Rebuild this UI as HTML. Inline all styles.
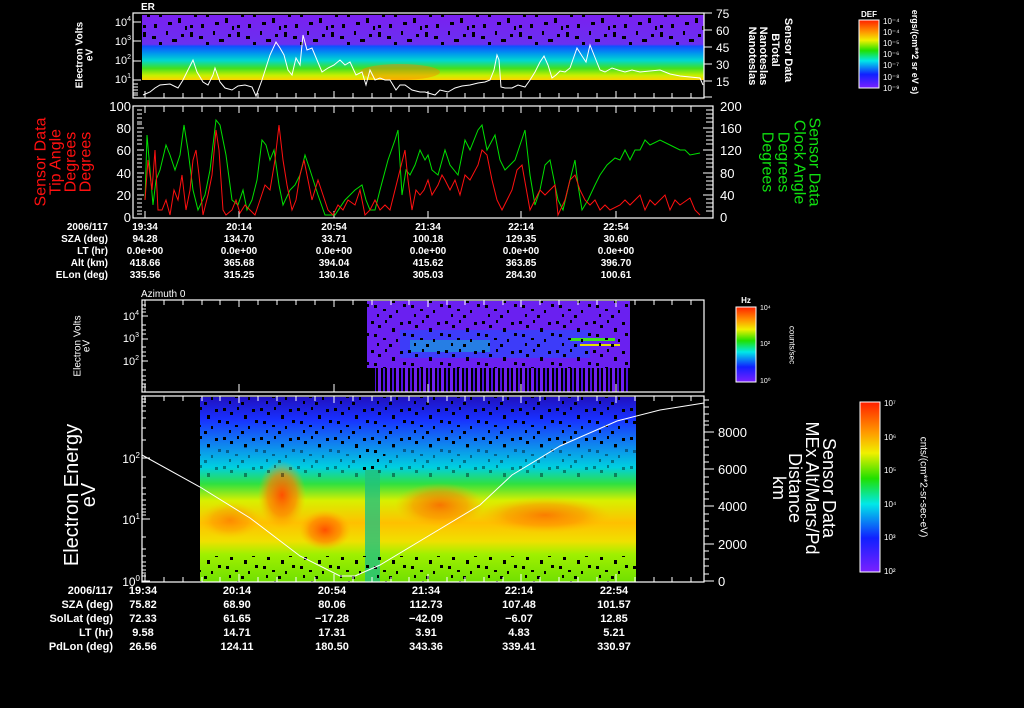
<!DOCTYPE html>
<html><head><meta charset="utf-8"><style>
html,body{margin:0;padding:0;background:#000;}
svg{display:block;}
text{font-family:"Liberation Sans",sans-serif;fill:#fff;}
</style></head><body>
<svg width="1024" height="708" viewBox="0 0 1024 708" xmlns="http://www.w3.org/2000/svg">
<defs>
<linearGradient id="rb" x1="0" y1="0" x2="0" y2="1">
<stop offset="0" stop-color="#ff2000"/><stop offset="0.18" stop-color="#ff9a00"/><stop offset="0.3" stop-color="#f0f000"/><stop offset="0.45" stop-color="#20e000"/><stop offset="0.6" stop-color="#00e8e8"/><stop offset="0.8" stop-color="#1020ff"/><stop offset="1" stop-color="#7a20ff"/>
</linearGradient>
<linearGradient id="er" x1="0" y1="0" x2="0" y2="1">
<stop offset="0" stop-color="#7a20f0"/><stop offset="0.45" stop-color="#6a30f0"/><stop offset="0.48" stop-color="#1050ff"/><stop offset="0.58" stop-color="#0090f0"/><stop offset="0.7" stop-color="#00d8d0"/><stop offset="0.82" stop-color="#40e020"/><stop offset="0.93" stop-color="#c8f000"/><stop offset="1" stop-color="#ffd000"/>
</linearGradient>
<linearGradient id="sp" x1="0" y1="0" x2="0" y2="1">
<stop offset="0" stop-color="#2010c0"/><stop offset="0.12" stop-color="#1830ff"/><stop offset="0.25" stop-color="#1080f0"/><stop offset="0.38" stop-color="#00d0e0"/><stop offset="0.47" stop-color="#30e040"/><stop offset="0.56" stop-color="#d8f000"/><stop offset="0.68" stop-color="#ffc000"/><stop offset="0.78" stop-color="#f0e000"/><stop offset="0.85" stop-color="#a0f000"/><stop offset="1" stop-color="#70e000"/>
</linearGradient>
<radialGradient id="blob"><stop offset="0" stop-color="#ff5000"/><stop offset="0.6" stop-color="#ff8000" stop-opacity="0.7"/><stop offset="1" stop-color="#ffb000" stop-opacity="0"/></radialGradient>
<pattern id="spk" width="47" height="31" patternUnits="userSpaceOnUse">
<rect x="2" y="1" width="3" height="5" fill="#000"/><rect x="11" y="5" width="4" height="3" fill="#000"/><rect x="18" y="11" width="3" height="6" fill="#000"/><rect x="6" y="14" width="3" height="3" fill="#000"/><rect x="25" y="0" width="2" height="4" fill="#000"/><rect x="31" y="8" width="5" height="3" fill="#000"/><rect x="40" y="3" width="3" height="3" fill="#000"/><rect x="37" y="18" width="3" height="5" fill="#000"/><rect x="27" y="22" width="4" height="3" fill="#000"/><rect x="13" y="24" width="3" height="4" fill="#000"/><rect x="2" y="25" width="3" height="3" fill="#000"/><rect x="44" y="26" width="2" height="4" fill="#000"/>
</pattern>
<pattern id="spk2" width="37" height="29" patternUnits="userSpaceOnUse">
<rect x="1" y="2" width="3" height="3" fill="#000"/><rect x="8" y="6" width="3" height="3" fill="#000"/><rect x="15" y="1" width="2" height="3" fill="#000"/><rect x="22" y="9" width="3" height="4" fill="#000"/><rect x="30" y="3" width="3" height="3" fill="#000"/><rect x="4" y="15" width="3" height="3" fill="#000"/><rect x="13" y="19" width="3" height="2" fill="#000"/><rect x="26" y="20" width="2" height="3" fill="#000"/><rect x="33" y="14" width="3" height="3" fill="#000"/><rect x="19" y="25" width="3" height="3" fill="#000"/><rect x="7" y="24" width="2" height="3" fill="#000"/>
</pattern>
<pattern id="bars" width="9" height="30" patternUnits="userSpaceOnUse">
<rect x="0" y="0" width="3" height="30" fill="#7020f0"/><rect x="5" y="0" width="2" height="30" fill="#5010e0"/>
</pattern>
</defs>

<!-- ===== Panel 1 ER ===== -->
<text x="141" y="10" font-size="10" font-weight="bold">ER</text>
<rect x="142" y="15" width="562" height="65" fill="url(#er)"/>
<rect x="142" y="15" width="562" height="30" fill="url(#spk)"/>
<ellipse cx="400" cy="72" rx="40" ry="8" fill="#ff8000" opacity="0.45"/>
<rect x="133" y="13" width="571" height="85" fill="none" stroke="#fff" stroke-width="1.2"/>
<g stroke="#fff" stroke-width="1">
<line x1="133" y1="22" x2="141" y2="22"/><line x1="133" y1="41" x2="141" y2="41"/><line x1="133" y1="61" x2="141" y2="61"/><line x1="133" y1="80" x2="141" y2="80"/>
<line x1="133" y1="84" x2="138" y2="84"/><line x1="133" y1="87" x2="138" y2="87"/><line x1="133" y1="90" x2="138" y2="90"/><line x1="133" y1="93" x2="138" y2="93"/><line x1="133" y1="95" x2="138" y2="95"/>
<line x1="704" y1="13" x2="712" y2="13"/><line x1="704" y1="30" x2="712" y2="30"/><line x1="704" y1="47" x2="712" y2="47"/><line x1="704" y1="64" x2="712" y2="64"/><line x1="704" y1="81" x2="712" y2="81"/><line x1="704" y1="97" x2="712" y2="97"/>
</g>
<path d="M145 98v-7M164 98v-5M183 98v-5M202 98v-5M220 98v-5M239 98v-7M258 98v-5M277 98v-5M296 98v-5M315 98v-5M334 98v-7M353 98v-5M372 98v-5M391 98v-5M409 98v-5M428 98v-7M447 98v-5M465 98v-5M484 98v-5M503 98v-5M521 98v-7M540 98v-5M559 98v-5M578 98v-5M597 98v-5M616 98v-7M635 98v-5M654 98v-5M672 98v-5M691 98v-5" stroke="#fff"/>
<g font-size="11" text-anchor="end">
<text x="131" y="26">10<tspan font-size="7" dy="-5">4</tspan></text>
<text x="131" y="45">10<tspan font-size="7" dy="-5">3</tspan></text>
<text x="131" y="64">10<tspan font-size="7" dy="-5">2</tspan></text>
<text x="131" y="83">10<tspan font-size="7" dy="-5">1</tspan></text>
</g>
<g font-size="12"><text x="716" y="18">75</text><text x="716" y="35">60</text><text x="716" y="52">45</text><text x="716" y="69">30</text><text x="716" y="86">15</text></g>
<polyline fill="none" stroke="#fff" stroke-width="1" points="143,95 150,92 155,88 160,85 170,84 178,88 183,80 188,70 193,60 197,72 203,82 208,85 213,75 215,68 220,82 225,88 232,90 238,86 245,85 252,87 256,96 262,80 270,55 276,42 280,48 284,55 288,70 292,75 296,58 300,65 303,35 307,50 312,48 317,60 322,72 328,68 334,65 340,60 345,65 350,62 356,75 362,72 366,85 370,70 375,80 380,78 385,80 390,80 396,90 400,85 405,85 412,90 420,92 425,92 435,95 440,90 448,92 455,88 462,86 470,85 478,83 485,82 490,80 494,70 497,55 499,60 501,87 505,88 512,88 518,85 525,87 530,80 535,72 540,62 544,56 548,65 552,78 556,75 560,71 565,72 570,68 577,48 582,56 586,62 590,45 594,55 600,70 605,72 612,68 618,70 625,72 632,70 640,72 650,71 660,70 670,74 680,76 690,77 700,78 703,85"/>
<g font-size="10" font-weight="bold">
<text transform="translate(80,55) rotate(-90)" text-anchor="middle" dominant-baseline="central">Electron Volts</text>
<text transform="translate(90,55) rotate(-90)" text-anchor="middle" dominant-baseline="central">eV</text>
<text transform="translate(788,50) rotate(90)" text-anchor="middle" dominant-baseline="central" font-size="11">Sensor Data</text>
<text transform="translate(775,50) rotate(90)" text-anchor="middle" dominant-baseline="central" font-size="11">BTotal</text>
<text transform="translate(763,56) rotate(90)" text-anchor="middle" dominant-baseline="central" font-size="11">Nanoteslas</text>
<text transform="translate(752,56) rotate(90)" text-anchor="middle" dominant-baseline="central" font-size="11">Nanoteslas</text>
</g>
<text x="869" y="17" font-size="8" font-weight="bold" text-anchor="middle">DEF</text>
<rect x="859" y="20" width="20" height="68" fill="url(#rb)" stroke="#fff" stroke-width="1"/>
<g font-size="8"><text x="883" y="24">10⁻⁴</text><text x="883" y="35">10⁻⁴</text><text x="883" y="46">10⁻⁵</text><text x="883" y="57">10⁻⁶</text><text x="883" y="68">10⁻⁷</text><text x="883" y="80">10⁻⁸</text><text x="883" y="91">10⁻⁹</text></g>
<text transform="translate(915,52) rotate(90)" text-anchor="middle" dominant-baseline="central" font-size="9" font-weight="bold">ergs/(cm**2 sr eV s)</text>

<!-- ===== Panel 2 ===== -->
<rect x="133" y="106" width="580" height="112" fill="none" stroke="#fff" stroke-width="1.2"/>
<g stroke="#fff" stroke-width="1">
<line x1="137" y1="128" x2="144" y2="128"/><line x1="137" y1="150" x2="144" y2="150"/><line x1="137" y1="173" x2="144" y2="173"/><line x1="137" y1="195" x2="144" y2="195"/>
<line x1="703" y1="128" x2="713" y2="128"/><line x1="703" y1="150" x2="713" y2="150"/><line x1="703" y1="173" x2="713" y2="173"/><line x1="703" y1="195" x2="713" y2="195"/>
</g>
<path d="M137 110H142M137 114H142M137 118H142M137 122H142M137 124H142M137 132H142M137 136H142M137 140H142M137 144H142M137 155H142M137 159H142M137 163H142M137 167H142M137 177H142M137 181H142M137 185H142M137 189H142M137 199H142M137 203H142M137 207H142M137 211H142M137 214H142M706 110H713M706 114H713M706 118H713M706 122H713M706 132H713M706 136H713M706 140H713M706 144H713M706 155H713M706 159H713M706 163H713M706 167H713M706 177H713M706 181H713M706 185H713M706 189H713M706 199H713M706 203H713M706 207H713M706 211H713" stroke="#fff" stroke-width="1"/>
<path d="M145 218V211M239 218V211M334 218V211M428 218V211M521 218V211M616 218V211M145 106V113M239 106V113M334 106V113M428 106V113M521 106V113M616 106V113M164 106v6M183 106v6M202 106v6M220 106v6M258 106v6M277 106v6M296 106v6M315 106v6M353 106v6M372 106v6M391 106v6M409 106v6M447 106v6M465 106v6M484 106v6M503 106v6M540 106v6M559 106v6M578 106v6M597 106v6M635 106v6M654 106v6M672 106v6M691 106v6" stroke="#fff" stroke-width="1"/>
<g font-size="13" text-anchor="end"><text x="131" y="111">100</text><text x="131" y="133">80</text><text x="131" y="155">60</text><text x="131" y="178">40</text><text x="131" y="200">20</text><text x="131" y="222">0</text></g>
<g font-size="13"><text x="720" y="111">200</text><text x="720" y="133">160</text><text x="720" y="155">120</text><text x="720" y="178">80</text><text x="720" y="200">40</text><text x="720" y="222">0</text></g>
<polyline fill="none" stroke="#00e000" stroke-width="1" points="145,200 147,135 150,170 153,205 156,180 160,170 166,145 170,155 175,170 180,155 184,125 188,150 193,190 198,210 205,195 210,170 216,120 220,125 226,155 232,200 238,205 243,190 247,210 252,200 257,180 262,140 266,145 270,160 274,150 279,185 283,205 290,190 295,185 300,175 305,155 310,170 318,195 325,215 335,215 345,200 355,190 362,185 366,200 370,210 375,210 380,190 388,160 395,140 398,130 402,195 406,170 410,175 415,165 420,150 425,160 428,155 432,170 438,175 445,150 450,165 458,175 465,140 470,150 478,130 482,125 487,150 495,135 500,160 505,170 510,165 515,160 520,145 525,130 530,175 535,205 540,190 545,165 550,160 554,180 558,200 563,210 570,180 575,160 578,185 582,210 588,200 595,185 600,175 607,165 615,158 620,160 625,150 630,160 635,150 640,150 645,140 650,145 660,140 670,145 680,150 685,150 690,155 700,153"/>
<polyline fill="none" stroke="#ff1010" stroke-width="1" points="145,200 148,160 152,190 155,150 158,210 162,210 166,200 170,215 174,190 178,200 182,175 186,210 190,190 193,160 196,150 199,175 203,215 208,195 212,175 216,130 219,150 223,210 226,215 232,210 236,200 240,213 245,205 250,210 255,215 260,200 265,185 270,190 275,160 279,125 283,160 287,185 292,210 296,200 300,175 304,160 308,180 312,200 318,180 323,195 328,210 333,215 338,205 343,210 348,200 355,205 360,190 365,215 370,210 375,200 380,210 385,205 390,210 395,190 400,170 405,150 408,180 412,210 416,190 420,195 424,190 428,180 432,195 438,185 442,175 445,180 450,190 455,180 460,195 465,175 470,180 478,165 482,150 487,155 492,180 497,200 502,210 507,200 512,190 517,170 522,165 530,210 535,200 540,190 545,195 550,190 555,185 558,215 565,200 570,180 575,175 580,190 585,200 590,205 595,200 600,210 605,205 610,210 620,205 625,200 630,205 640,195 645,210 650,200 655,205 665,195 670,210 675,200 680,205 690,198 695,210 700,215"/>
<g font-size="16">
<text transform="translate(41,162) rotate(-90)" text-anchor="middle" dominant-baseline="central" style="fill:#ff1010">Sensor Data</text>
<text transform="translate(56,162) rotate(-90)" text-anchor="middle" dominant-baseline="central" style="fill:#ff1010">Tip Angle</text>
<text transform="translate(71,162) rotate(-90)" text-anchor="middle" dominant-baseline="central" style="fill:#ff1010">Degrees</text>
<text transform="translate(86,162) rotate(-90)" text-anchor="middle" dominant-baseline="central" style="fill:#ff1010">Degrees</text>
</g>
<g font-size="16">
<text transform="translate(814,162) rotate(90)" text-anchor="middle" dominant-baseline="central" style="fill:#10e010">Sensor Data</text>
<text transform="translate(799,162) rotate(90)" text-anchor="middle" dominant-baseline="central" style="fill:#10e010">Clock Angle</text>
<text transform="translate(783,162) rotate(90)" text-anchor="middle" dominant-baseline="central" style="fill:#10e010">Degrees</text>
<text transform="translate(767,162) rotate(90)" text-anchor="middle" dominant-baseline="central" style="fill:#10e010">Degrees</text>
</g>
<g font-size="10" font-weight="bold">
<g text-anchor="end"><text x="108" y="230">2006/117</text><text x="108" y="242">SZA (deg)</text><text x="108" y="254">LT (hr)</text><text x="108" y="266">Alt (km)</text><text x="108" y="278">ELon (deg)</text></g>
<g text-anchor="middle">
<text x="145" y="230">19:34</text><text x="239" y="230">20:14</text><text x="334" y="230">20:54</text><text x="428" y="230">21:34</text><text x="521" y="230">22:14</text><text x="616" y="230">22:54</text>
<text x="145" y="242">94.28</text><text x="239" y="242">134.70</text><text x="334" y="242">33.71</text><text x="428" y="242">100.18</text><text x="521" y="242">129.35</text><text x="616" y="242">30.60</text>
<text x="145" y="254">0.0e+00</text><text x="239" y="254">0.0e+00</text><text x="334" y="254">0.0e+00</text><text x="428" y="254">0.0e+00</text><text x="521" y="254">0.0e+00</text><text x="616" y="254">0.0e+00</text>
<text x="145" y="266">418.66</text><text x="239" y="266">365.68</text><text x="334" y="266">394.04</text><text x="428" y="266">415.62</text><text x="521" y="266">363.85</text><text x="616" y="266">396.70</text>
<text x="145" y="278">335.56</text><text x="239" y="278">315.25</text><text x="334" y="278">130.16</text><text x="428" y="278">305.03</text><text x="521" y="278">284.30</text><text x="616" y="278">100.61</text>
</g></g>

<!-- ===== Panel 3 ===== -->
<text x="141" y="297" font-size="10">Azimuth 0</text>
<rect x="367" y="301" width="263" height="67" fill="#6a20f0"/>
<rect x="400" y="330" width="190" height="28" fill="#2050ff" opacity="0.6"/>
<rect x="410" y="340" width="80" height="12" fill="#10c0d0" opacity="0.5"/>
<rect x="570" y="338" width="45" height="3" fill="#40e020"/>
<rect x="580" y="344" width="40" height="2" fill="#e0e000"/>
<rect x="367" y="301" width="263" height="67" fill="url(#spk2)"/>
<rect x="375" y="368" width="255" height="24" fill="url(#bars)"/>
<rect x="142" y="300" width="562" height="92" fill="none" stroke="#fff" stroke-width="1.2"/>
<path d="M142 316h6M142 339h6M142 361h6M142 305h4M142 309h4M142 312h4M142 325h4M142 330h4M142 334h4M142 347h4M142 352h4M142 356h4M142 370h4M142 376h4M142 380h4M142 384h4M142 387h4M145 392V384M239 392V384M334 392V384M428 392V384M521 392V384M616 392V384M145 300V307M164 300v5M183 300v5M202 300v5M220 300v5M239 300v7M258 300v5M277 300v5M296 300v5M315 300v5M334 300v7M353 300v5M372 300v5M391 300v5M409 300v5M428 300v7M447 300v5M465 300v5M484 300v5M503 300v5M521 300v7M540 300v5M559 300v5M578 300v5M597 300v5M616 300v7M635 300v5M654 300v5M672 300v5M691 300v5" stroke="#fff"/>
<g font-size="11" text-anchor="end">
<text x="139" y="320">10<tspan font-size="7" dy="-5">4</tspan></text>
<text x="139" y="342">10<tspan font-size="7" dy="-5">3</tspan></text>
<text x="139" y="365">10<tspan font-size="7" dy="-5">2</tspan></text>
</g>
<g font-size="10">
<text transform="translate(78,346) rotate(-90)" text-anchor="middle" dominant-baseline="central">Electron Volts</text>
<text transform="translate(87,346) rotate(-90)" text-anchor="middle" dominant-baseline="central">eV</text>
</g>
<text x="746" y="303" font-size="8" font-weight="bold" text-anchor="middle">Hz</text>
<rect x="736" y="307" width="20" height="75" fill="url(#rb)" stroke="#fff"/>
<g font-size="7"><text x="760" y="310">10⁴</text><text x="760" y="346">10²</text><text x="760" y="383">10⁰</text></g>
<text transform="translate(792,345) rotate(90)" text-anchor="middle" dominant-baseline="central" font-size="8">counts/sec</text>

<!-- ===== Panel 4 ===== -->
<rect x="200" y="397" width="436" height="185" fill="url(#sp)"/>
<ellipse cx="282" cy="495" rx="24" ry="34" fill="url(#blob)"/>
<ellipse cx="325" cy="530" rx="26" ry="20" fill="url(#blob)"/>
<ellipse cx="230" cy="520" rx="30" ry="18" fill="url(#blob)" opacity="0.5"/>
<ellipse cx="440" cy="505" rx="45" ry="22" fill="url(#blob)" opacity="0.75"/>
<ellipse cx="545" cy="515" rx="65" ry="18" fill="url(#blob)" opacity="0.65"/>
<rect x="365" y="470" width="15" height="112" fill="#20c080" opacity="0.8"/>
<rect x="200" y="397" width="436" height="50" fill="url(#spk2)"/>
<rect x="200" y="447" width="436" height="30" fill="url(#spk2)" opacity="0.4"/>
<rect x="200" y="556" width="436" height="26" fill="url(#spk2)"/>
<rect x="355" y="430" width="30" height="40" fill="url(#spk2)"/>
<polyline fill="none" stroke="#fff" stroke-width="1" points="142,455 200,487 250,518 300,556 340,576 355,576 380,565 430,535 480,505 512,475 560,446 617,421 660,410 704,403"/>
<rect x="142" y="396" width="562" height="186" fill="none" stroke="#fff" stroke-width="1.2"/>
<path d="M142 458h8M142 519h8M142 581h8M142 399h4M142 402h4M142 406h4M142 411h4M142 418h4M142 428h4M142 440h4M142 477h4M142 488h4M142 494h4M142 500h4M142 505h4M142 509h4M142 512h4M142 515h4M142 537h4M142 549h4M142 556h4M142 562h4M142 566h4M142 570h4M142 573h4M142 576h4M704 432h10M704 469h10M704 506h10M704 544h10M704 581h10M704 400h5M704 407h5M704 414h5M704 421h5M704 425h5M704 440h5M704 447h5M704 455h5M704 462h5M704 477h5M704 484h5M704 492h5M704 499h5M704 514h5M704 521h5M704 529h5M704 536h5M704 551h5M704 559h5M704 566h5M704 574h5M145 582V574M239 582V574M334 582V574M428 582V574M521 582V574M616 582V574M164 582v-5M183 582v-5M202 582v-5M220 582v-5M258 582v-5M277 582v-5M296 582v-5M315 582v-5M353 582v-5M372 582v-5M391 582v-5M409 582v-5M447 582v-5M465 582v-5M484 582v-5M503 582v-5M540 582v-5M559 582v-5M578 582v-5M597 582v-5M635 582v-5M654 582v-5M672 582v-5M691 582v-5M145 396v7M164 396v5M183 396v5M202 396v5M220 396v5M239 396v7M258 396v5M277 396v5M296 396v5M315 396v5M334 396v7M353 396v5M372 396v5M391 396v5M409 396v5M428 396v7M447 396v5M465 396v5M484 396v5M503 396v5M521 396v7M540 396v5M559 396v5M578 396v5M597 396v5M616 396v7M635 396v5M654 396v5M672 396v5M691 396v5" stroke="#fff"/>
<g font-size="12" text-anchor="end">
<text x="140" y="463">10<tspan font-size="8" dy="-5">2</tspan></text>
<text x="140" y="524">10<tspan font-size="8" dy="-5">1</tspan></text>
<text x="140" y="586">10<tspan font-size="8" dy="-5">0</tspan></text>
</g>
<g font-size="13"><text x="718" y="437">8000</text><text x="718" y="474">6000</text><text x="718" y="511">4000</text><text x="718" y="549">2000</text><text x="718" y="586">0</text></g>
<g font-size="20">
<text transform="translate(72,495) rotate(-90)" text-anchor="middle" dominant-baseline="central">Electron Energy</text>
<text transform="translate(89,495) rotate(-90)" text-anchor="middle" dominant-baseline="central">eV</text>
</g>
<g font-size="18">
<text transform="translate(829,488) rotate(90)" text-anchor="middle" dominant-baseline="central">Sensor Data</text>
<text transform="translate(812,488) rotate(90)" text-anchor="middle" dominant-baseline="central">MEx Alt/Mars/Pd</text>
<text transform="translate(795,488) rotate(90)" text-anchor="middle" dominant-baseline="central">Distance</text>
<text transform="translate(779,488) rotate(90)" text-anchor="middle" dominant-baseline="central">km</text>
</g>
<rect x="860" y="402" width="20" height="170" fill="url(#rb)" stroke="#fff"/>
<g font-size="8"><text x="884" y="406">10⁷</text><text x="884" y="440">10⁶</text><text x="884" y="473">10⁵</text><text x="884" y="507">10⁴</text><text x="884" y="540">10³</text><text x="884" y="574">10²</text></g>
<text transform="translate(923,487) rotate(90)" text-anchor="middle" dominant-baseline="central" font-size="10">cnts/(cm**2-sr-sec-eV)</text>
<g font-size="11" font-weight="bold">
<g text-anchor="end"><text x="113" y="594">2006/117</text><text x="113" y="608">SZA (deg)</text><text x="113" y="622">SolLat (deg)</text><text x="113" y="636">LT (hr)</text><text x="113" y="650">PdLon (deg)</text></g>
<g text-anchor="middle">
<text x="143" y="594">19:34</text><text x="237" y="594">20:14</text><text x="332" y="594">20:54</text><text x="426" y="594">21:34</text><text x="519" y="594">22:14</text><text x="614" y="594">22:54</text>
<text x="143" y="608">75.82</text><text x="237" y="608">68.90</text><text x="332" y="608">80.06</text><text x="426" y="608">112.73</text><text x="519" y="608">107.48</text><text x="614" y="608">101.57</text>
<text x="143" y="622">72.33</text><text x="237" y="622">61.65</text><text x="332" y="622">−17.28</text><text x="426" y="622">−42.09</text><text x="519" y="622">−6.07</text><text x="614" y="622">12.85</text>
<text x="143" y="636">9.58</text><text x="237" y="636">14.71</text><text x="332" y="636">17.31</text><text x="426" y="636">3.91</text><text x="519" y="636">4.83</text><text x="614" y="636">5.21</text>
<text x="143" y="650">26.56</text><text x="237" y="650">124.11</text><text x="332" y="650">180.50</text><text x="426" y="650">343.36</text><text x="519" y="650">339.41</text><text x="614" y="650">330.97</text>
</g></g>
</svg>
</body></html>
